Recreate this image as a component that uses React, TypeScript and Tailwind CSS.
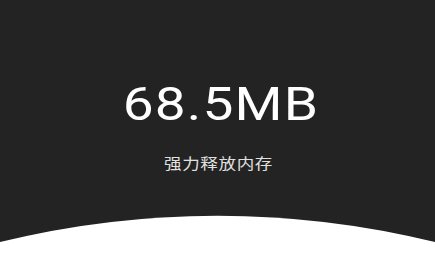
export default function App() {
  return (
    <div className="relative flex h-[266px] w-[435px] flex-col items-center overflow-hidden bg-[#232323]">
      <div className="ml-[6px] origin-center scale-x-[1.17] pt-[80px] text-[47px] leading-none tracking-[1px] text-white [font-family:Roboto,'Noto_Sans',sans-serif]">
        68.5MB
      </div>
      <div className="mt-[28px] ml-[2px] origin-center scale-x-[1.17] text-[15px] leading-none tracking-[0.5px] text-[#e0e0e0] [font-family:'Noto_Sans_CJK_SC',sans-serif]">
        强力释放内存
      </div>
      <svg className="mt-auto block" width="435" height="52" viewBox="0 214 435 52">
        <path d="M0 242 A910 910 0 0 1 435 242 L435 266 L0 266 Z" fill="#ffffff" />
      </svg>
    </div>
  );
}
